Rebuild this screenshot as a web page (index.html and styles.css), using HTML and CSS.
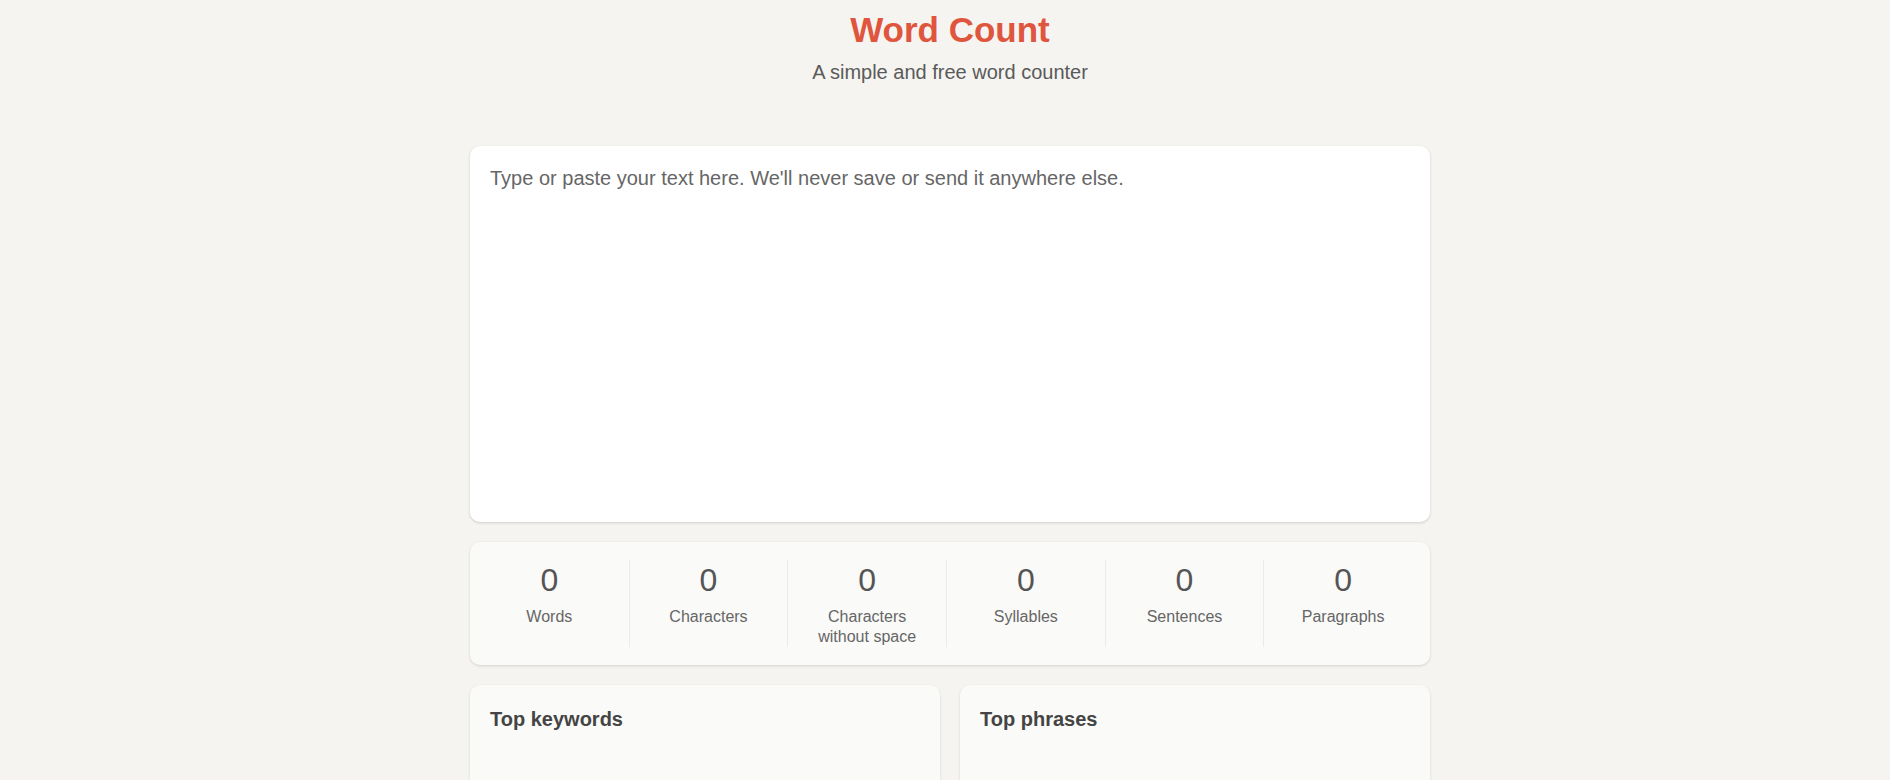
FILE: index.html
```html
<!DOCTYPE html>
<html lang="en">
<head>
<meta charset="utf-8">
<title>Word Count</title>
<link rel="stylesheet" href="styles.css">
</head>
<body>
<div class="page">
  <header class="header">
    <h1 class="title">Word Count</h1>
    <p class="subtitle">A simple and free word counter</p>
  </header>
  <main class="main">
    <div class="editor-card">
      <textarea class="editor" placeholder="Type or paste your text here. We'll never save or send it anywhere else."></textarea>
    </div>
    <section class="stats">
      <div class="stat"><div class="stat-num">0</div><div class="stat-label">Words</div></div>
      <div class="stat"><div class="stat-num">0</div><div class="stat-label">Characters</div></div>
      <div class="stat"><div class="stat-num">0</div><div class="stat-label">Characters<br>without space</div></div>
      <div class="stat"><div class="stat-num">0</div><div class="stat-label">Syllables</div></div>
      <div class="stat"><div class="stat-num">0</div><div class="stat-label">Sentences</div></div>
      <div class="stat"><div class="stat-num">0</div><div class="stat-label">Paragraphs</div></div>
    </section>
    <section class="lists">
      <div class="list-card"><h2 class="list-title">Top keywords</h2></div>
      <div class="list-card"><h2 class="list-title">Top phrases</h2></div>
    </section>
  </main>
</div>
</body>
</html>
```
FILE: styles.css
```css
* { box-sizing: border-box; }
html, body {
  margin: 0;
  padding: 0;
  background: #f5f4f0;
  font-family: "Liberation Sans", Arial, sans-serif;
  color: #444;
  overflow: hidden;
}
.page {
  padding-left: 10px;
}
.header {
  padding-top: 9px;
  text-align: center;
}
.title {
  margin: 0;
  font-size: 35px;
  line-height: 1.2;
  font-weight: 700;
  color: #e0553d;
}
.subtitle {
  margin: 9px 0 0;
  font-size: 20px;
  line-height: 1.2;
  color: #5a5a5a;
}
.main {
  width: 960px;
  margin: 62px auto 0;
  display: flex;
  flex-direction: column;
  gap: 20px;
}
.editor-card {
  height: 376px;
  background: #fff;
  border-radius: 10px;
  box-shadow: 0 1px 3px rgba(0, 0, 0, 0.16);
  display: flex;
}
.editor {
  flex: 1;
  border: none;
  outline: none;
  resize: none;
  background: transparent;
  padding: 20px;
  font-family: "Liberation Sans", Arial, sans-serif;
  font-size: 20px;
  line-height: 1.2;
  color: #444;
}
.editor::placeholder {
  color: #666;
  opacity: 1;
}
.stats {
  display: grid;
  grid-template-columns: repeat(6, 1fr);
  padding: 18px 8px 18px 0;
  background: #fafaf8;
  border-radius: 10px;
  box-shadow: 0 1px 3px rgba(0, 0, 0, 0.14);
}
.stat {
  height: 87px;
  text-align: center;
  border-left: 1px solid #ecebe7;
}
.stat:first-child {
  border-left: none;
}
.stat-num {
  font-size: 32px;
  line-height: 1.3;
  color: #555;
}
.stat-label {
  margin-top: 5px;
  font-size: 16px;
  line-height: 20px;
  color: #666;
}
.lists {
  display: grid;
  grid-template-columns: 1fr 1fr;
  gap: 20px;
}
.list-card {
  height: 200px;
  padding: 21px 20px 20px;
  background: #fafaf8;
  border-radius: 10px;
  box-shadow: 0 1px 3px rgba(0, 0, 0, 0.12);
}
.list-title {
  margin: 0;
  font-size: 20px;
  line-height: 1.35;
  font-weight: 700;
  color: #444;
}
```
